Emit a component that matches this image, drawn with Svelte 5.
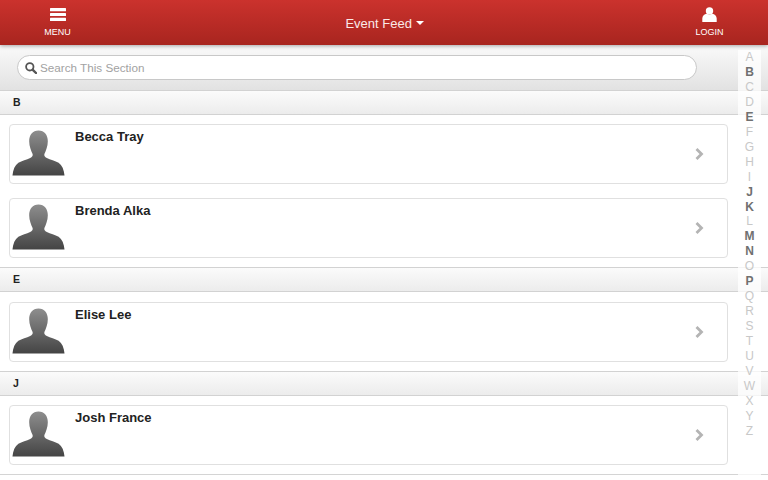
<script>
	const sections = [
		{ letter: 'B', people: ['Becca Tray', 'Brenda Alka'] },
		{ letter: 'E', people: ['Elise Lee'] },
		{ letter: 'J', people: ['Josh France'] }
	];
	const active = 'BEJKMNP';
	const letters = 'ABCDEFGHIJKLMNOPQRSTUVWXYZ'.split('');
</script>

<div class="page">
	<header class="top_bar">
		<div class="top_btn">
			<svg width="16" height="15" viewBox="0 0 16 15" fill="#fff"><rect y="1" width="16" height="3.200" rx="0.500"/><rect y="5.900" width="16" height="3.200" rx="0.500"/><rect y="10.800" width="16" height="3.200" rx="0.500"/></svg>
			<span>MENU</span>
		</div>
		<div class="top_title">Event Feed <i class="caret"></i></div>
		<div class="top_btn">
			<svg width="15" height="15" viewBox="0 0 15 15" fill="#fff"><circle cx="7.500" cy="3.900" r="3.700"/><path d="M0.300 15v-3.400C0.300 9 2.400 7.200 4.700 6.800c1.500 0.900 4.100 0.900 5.600 0 2.300 0.400 4.400 2.200 4.400 4.800V15z"/></svg>
			<span>LOGIN</span>
		</div>
	</header>

	<div class="search_bar">
		<div class="search_input">
			<svg width="12" height="12" viewBox="0 0 12 12" fill="none" stroke="#555" stroke-width="1.800"><circle cx="4.800" cy="4.800" r="3.700"/><path d="M7.800 7.800l3.200 3.200" stroke-width="2.400" stroke-linecap="round"/></svg>
			<span>Search This Section</span>
		</div>
	</div>

	{#each sections as section}
		<div class="section_head">{section.letter}</div>
		<div class="section_list">
			{#each section.people as person}
				<div class="card">
					<svg class="avatar" width="53" height="46" viewBox="0 0 54 46">
						<defs>
							<linearGradient id="sil" x1="0" y1="0" x2="0" y2="1">
								<stop offset="0" stop-color="#8e8e8e"/>
								<stop offset="1" stop-color="#444"/>
							</linearGradient>
						</defs>
						<path fill="url(#sil)" d="M27 0C33 0 36.500 4.500 36.500 11C36.500 16 34.500 21 33 24C32.500 26 33.500 27 35.500 28C39 30 44 30.500 47.500 33C51 35.500 53 40 53.500 46H0.500C1 40 3 35.500 6.500 33C10 30.500 15 30 18.500 28C20.500 27 21.500 26 21 24C19.500 21 17.500 16 17.500 11C17.500 4.500 21 0 27 0z"/>
					</svg>
					<div class="name">{person}</div>
					<svg class="chevron" width="9" height="12" viewBox="0 0 9 12" fill="none" stroke="#b4b4b4" stroke-width="2.800"><path d="M1.500 1l5 5-5 5"/></svg>
				</div>
			{/each}
		</div>
	{/each}
	<div class="bottom_line"></div>

	<nav class="index">
		{#each letters as l}
			<span class:on={active.includes(l)}>{l}</span>
		{/each}
	</nav>
</div>

<style>
	:global(body) {
		margin: 0;
		background: #fff;
	}

	.page {
		position: relative;
		width: 768px;
		height: 480px;
		overflow: hidden;
		background: #fff;
		font-family: 'Liberation Sans', Arial, sans-serif;
	}

	.top_bar {
		height: 45px;
		box-sizing: border-box;
		display: flex;
		align-items: flex-start;
		justify-content: space-between;
		padding: 0 46px 0 45px;
		background: linear-gradient(#cb322d, #a8251f);
		box-shadow: 0 1px 4px rgba(0, 0, 0, 0.35);
		position: relative;
		color: #fff;
	}

	.top_btn {
		display: flex;
		flex-direction: column;
		align-items: center;
		width: 25px;
		padding-top: 7px;
		gap: 5px;
		font-size: 9px;
		line-height: 11px;
	}

	.top_title {
		margin-top: 15px;
		font-size: 13px;
		line-height: 17px;
		color: #fbe9e8;
		padding-left: 2px;
	}

	.caret {
		display: inline-block;
		vertical-align: 3px;
		border: 4.500px solid transparent;
		border-top-color: #fff;
		border-bottom-width: 0;
	}

	.search_bar {
		height: 45px;
		box-sizing: border-box;
		padding: 10px 71px 0 17px;
		background: linear-gradient(#fafafa, #e2e2e2);
	}

	.search_input {
		height: 25px;
		box-sizing: border-box;
		display: flex;
		align-items: center;
		gap: 3px;
		padding-left: 7px;
		background: #fff;
		border: 1px solid #c8c8c8;
		border-radius: 13px;
		font-size: 11.700px;
		color: #a2a2a2;
	}

	.section_head {
		height: 25px;
		box-sizing: border-box;
		padding-left: 13px;
		font-size: 10.500px;
		font-weight: bold;
		line-height: 22px;
		color: #222;
		background: linear-gradient(#fbfbfb, #ececec);
		border-top: 1px solid #d2d2d2;
		border-bottom: 1px solid #d2d2d2;
	}

	.section_list {
		display: flex;
		flex-direction: column;
		gap: 14px;
		padding: 9.400px 40px 9px 9px;
	}

	.card {
		height: 60px;
		box-sizing: border-box;
		display: flex;
		align-items: flex-start;
		position: relative;
		background: #fff;
		border: 1px solid #e0e0e0;
		border-radius: 4px;
		padding-left: 2px;
	}

	.avatar {
		margin-top: 5px;
		flex: none;
	}

	.name {
		margin: 3px 0 0 10px;
		font-size: 13px;
		line-height: 17px;
		font-weight: bold;
		color: #222;
	}

	.chevron {
		margin: 23px 23px 0 auto;
	}

	.bottom_line {
		height: 1px;
		background: #d4d4d4;
	}

	.index {
		position: absolute;
		top: 50px;
		right: 7px;
		width: 23px;
		display: flex;
		flex-direction: column;
		align-items: center;
		padding-bottom: 45px;
		background: rgba(255, 255, 255, 0.75);
		font-size: 12px;
		line-height: 14.950px;
		color: #c8c8c8;
	}

	.index .on {
		color: #707070;
		font-weight: bold;
	}
</style>
